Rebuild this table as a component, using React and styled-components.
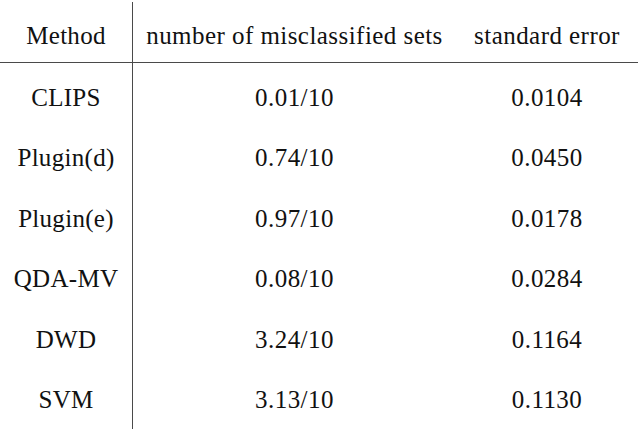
import styled, { createGlobalStyle } from "styled-components";

const GlobalStyle = createGlobalStyle`
  body {
    margin: 0;
    background: #ffffff;
  }
`;

const rows = [
  { method: "CLIPS", sets: "0.01/10", error: "0.0104" },
  { method: "Plugin(d)", sets: "0.74/10", error: "0.0450" },
  { method: "Plugin(e)", sets: "0.97/10", error: "0.0178" },
  { method: "QDA-MV", sets: "0.08/10", error: "0.0284" },
  { method: "DWD", sets: "3.24/10", error: "0.1164" },
  { method: "SVM", sets: "3.13/10", error: "0.1130" },
];

const App = () => {
  return (
    <Page>
      <GlobalStyle />
      <HeadRow>
        <MethodCell>Method</MethodCell>
        <SetsCell>number of misclassified sets</SetsCell>
        <ErrorCell>standard error</ErrorCell>
      </HeadRow>
      {rows.map((row) => (
        <Row key={row.method}>
          <MethodCell>{row.method}</MethodCell>
          <SetsCell>{row.sets}</SetsCell>
          <ErrorCell>{row.error}</ErrorCell>
        </Row>
      ))}
      <Row $tail>
        <MethodCell />
      </Row>
    </Page>
  );
};

export default App;

const Page = styled.div`
  width: 638px;
  padding-top: 2px;
  font-family: "Liberation Serif", Tinos, "Times New Roman", Times, serif;
  font-size: 25px;
  color: #111111;
`;

const Row = styled.div`
  display: flex;
  height: ${({ $tail }) => ($tail ? "4px" : "60.4px")};
  line-height: 1;
  text-align: center;
`;

const HeadRow = styled(Row)`
  height: 61px;
  box-sizing: border-box;
  border-bottom: 1.5px solid #4a4a4a;
`;

const MethodCell = styled.div`
  width: 133px;
  box-sizing: border-box;
  padding-top: 22px;
  border-right: 1.5px solid #4a4a4a;
  letter-spacing: 0.3px;
  ${HeadRow} & {
    padding-top: 21px;
  }
`;

const SetsCell = styled.div`
  width: 323px;
  padding-top: 22px;
  letter-spacing: 0.45px;
  ${HeadRow} & {
    padding-top: 21px;
  }
`;

const ErrorCell = styled(SetsCell)`
  width: 182px;
`;
